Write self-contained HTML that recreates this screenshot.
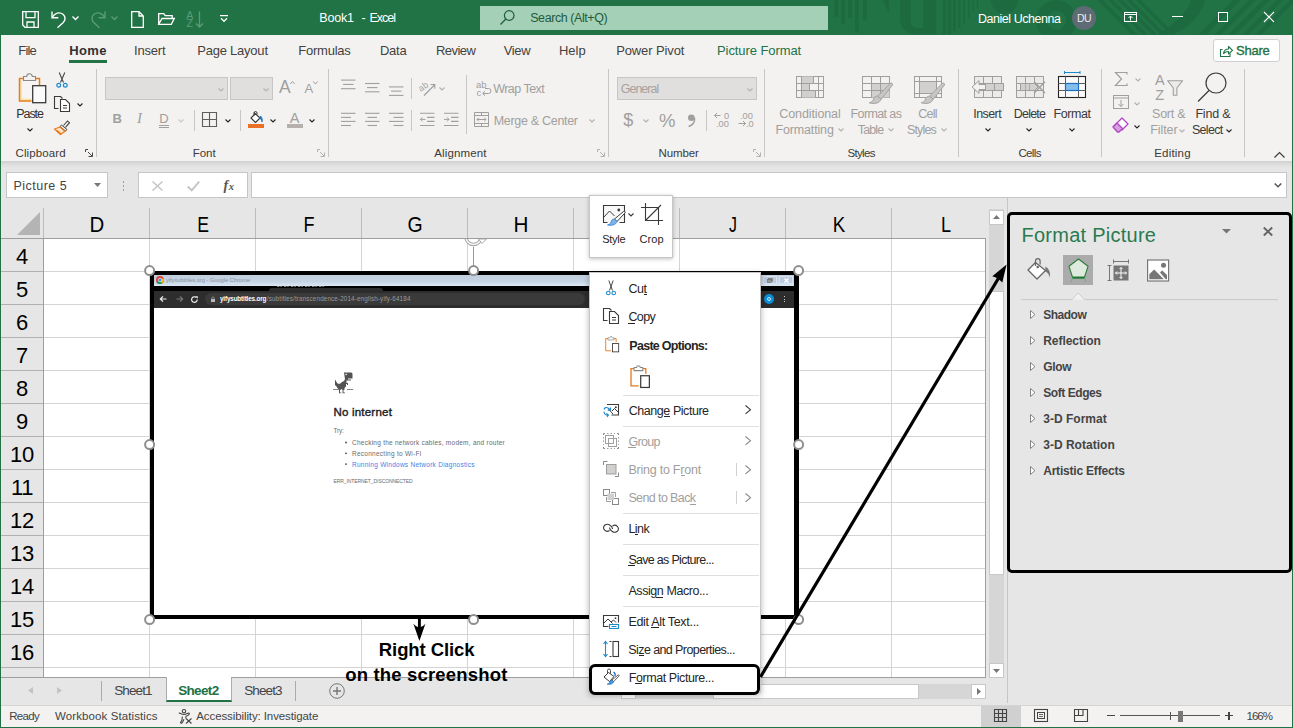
<!DOCTYPE html>
<html><head><meta charset="utf-8">
<style>
*{box-sizing:border-box;margin:0;padding:0}
html,body{width:1293px;height:728px;overflow:hidden;background:#e6e6e6;font-family:"Liberation Sans",sans-serif;}
#root{position:relative;width:1293px;height:728px;overflow:hidden;background:#e6e6e6}
.a{position:absolute}
.t{position:absolute;white-space:nowrap;line-height:1}
svg{position:absolute;overflow:visible}
#title{left:0;top:0;width:1293px;height:34.5px;background:#217346}
#tabs{left:1px;top:34px;width:1291px;height:31px;background:#f3f2f1}
#ribbon{left:1px;top:65px;width:1291px;height:96px;background:#f3f2f1}
#ribshadow{left:1px;top:161px;width:1291px;height:7px;background:linear-gradient(#cfcfcf,#dedede 50%,#e6e6e6)}
</style></head><body><div id="root">
<div id="tabs" class="a"></div>
<div class="t" style="left:18.30px;top:44px;font-size:13px;color:#444240;letter-spacing:-0.800px;">File</div>
<div class="t" style="left:134.00px;top:44px;font-size:13px;color:#444240;letter-spacing:-0.180px;">Insert</div>
<div class="t" style="left:197.20px;top:44px;font-size:13px;color:#444240;letter-spacing:-0.220px;">Page Layout</div>
<div class="t" style="left:298.30px;top:44px;font-size:13px;color:#444240;letter-spacing:-0.243px;">Formulas</div>
<div class="t" style="left:380.00px;top:44px;font-size:13px;color:#444240;letter-spacing:-0.267px;">Data</div>
<div class="t" style="left:436.00px;top:44px;font-size:13px;color:#444240;letter-spacing:-0.560px;">Review</div>
<div class="t" style="left:503.80px;top:44px;font-size:13px;color:#444240;letter-spacing:-0.400px;">View</div>
<div class="t" style="left:559.00px;top:44px;font-size:13px;color:#444240;letter-spacing:-0.033px;">Help</div>
<div class="t" style="left:616.20px;top:44px;font-size:13px;color:#444240;letter-spacing:-0.120px;">Power Pivot</div>
<div class="t" style="left:69.20px;top:44px;font-size:13px;color:#323130;letter-spacing:0.367px;font-weight:bold;">Home</div>
<div class="a" style="left:69px;top:60px;width:38px;height:3px;background:#217346;"></div>
<div class="t" style="left:717.00px;top:44px;font-size:13px;color:#217346;letter-spacing:-0.085px;">Picture Format</div>
<div class="a" style="left:1212.5px;top:38.5px;width:67px;height:23px;background:#fff;border:1px solid #d2d0ce;border-radius:3px"></div>
<svg style="left:1219.5px;top:44.5px" width="13" height="12" viewBox="0 0 13 12" ><path d="M2.500 4.500h-2v7h9.500v-3" fill="none" stroke="#217346" stroke-width="1.100"/><path d="M3.500 8.500c0.500-3 2.500-4.500 5-4.500v-2.500l4 3.800-4 3.700v-2.500c-2 0-3.500 0.500-5 2z" fill="none" stroke="#217346" stroke-width="1.100" stroke-linejoin="round"/></svg>
<div class="t" style="left:1236.00px;top:44px;font-size:13px;color:#217346;letter-spacing:-0.225px;-webkit-text-stroke:0.35px #217346;">Share</div>
<div id="ribbon" class="a"></div>
<div id="ribshadow" class="a"></div>
<div class="a" style="left:96px;top:69px;width:1px;height:88px;background:#c8c6c4;"></div>
<div class="a" style="left:328px;top:69px;width:1px;height:88px;background:#c8c6c4;"></div>
<div class="a" style="left:608px;top:69px;width:1px;height:88px;background:#c8c6c4;"></div>
<div class="a" style="left:764px;top:69px;width:1px;height:88px;background:#c8c6c4;"></div>
<div class="a" style="left:958px;top:69px;width:1px;height:88px;background:#c8c6c4;"></div>
<div class="a" style="left:1101px;top:69px;width:1px;height:88px;background:#c8c6c4;"></div>
<div class="a" style="left:1244px;top:69px;width:1px;height:88px;background:#c8c6c4;"></div>
<svg style="left:18px;top:72px" width="30" height="32" viewBox="0 0 30 32" ><path d="M6 6.500H1.500v22.500h12.500v-15h6v-7.500h-4" fill="#f6f5f4" stroke="none"/><path d="M3 8v19.500h11" fill="none" stroke="#fbe0a0" stroke-width="1.600"/><path d="M6 6.500H1.500v22.500h12" fill="none" stroke="#e67e17" stroke-width="1.500"/><path d="M16 6.500h5.500v7" fill="none" stroke="#e67e17" stroke-width="1.500"/>
<path d="M5.500 8.500v-4h3.200a2.800 2.800 0 0 1 5.600 0h3.200v4z" fill="#f3f2f1" stroke="#8a8886" stroke-width="1.100"/>
<rect x="14.700" y="13.700" width="13" height="17" fill="#fafafa" stroke="#3b3a39" stroke-width="1.300"/></svg>
<div class="t" style="left:16.30px;top:108px;font-size:12.5px;color:#323130;letter-spacing:-1.075px;">Paste</div>
<svg style="left:26.6px;top:127.7px" width="6" height="4.0" viewBox="0 0 6 4.0" ><path d="M0.5 0.5l2.5 2.5 2.5 -2.5" fill="none" stroke="#252423" stroke-width="1.1"/></svg>
<svg style="left:56px;top:72px" width="12" height="16" viewBox="0 0 12 16" ><path d="M3.200 0.500l4.300 10M8.800 0.500l-4.300 10" stroke="#484644" stroke-width="1.100" fill="none"/><circle cx="2.700" cy="13.200" r="1.900" fill="none" stroke="#1e8bcd" stroke-width="1.200"/><circle cx="9.300" cy="13.200" r="1.900" fill="none" stroke="#1e8bcd" stroke-width="1.200"/></svg>
<svg style="left:54px;top:96px" width="16" height="16" viewBox="0 0 16 16" ><path d="M4.500 12.500h-4v-12h6l2 2" fill="none" stroke="#3b3a39" stroke-width="1.100"/><path d="M6.500 3.500h5l4 4v8h-9z" fill="#fff" stroke="#3b3a39" stroke-width="1.100"/><path d="M9 9.500h4M9 12h4" stroke="#3b3a39" stroke-width="1"/></svg>
<svg style="left:76.8px;top:102.8px" width="6" height="4.0" viewBox="0 0 6 4.0" ><path d="M0.5 0.5l2.5 2.5 2.5 -2.5" fill="none" stroke="#252423" stroke-width="1.1"/></svg>
<svg style="left:54px;top:120px" width="17" height="15" viewBox="0 0 17 15" ><path d="M9.500 5.500l4-4.500 2 1.700-4 4.600" fill="none" stroke="#484644" stroke-width="1.100"/><path d="M7.500 5l5.500 4.500-1.500 1.500-5.500-4.500z" fill="#f3f2f1" stroke="#484644" stroke-width="1"/><path d="M6 7l5 4.300-4.500 3.200-6-5.500z" fill="#fde6cc" stroke="#e8791d" stroke-width="1.300" stroke-linejoin="round"/><path d="M3 10.500l4 3.500" stroke="#e8791d" stroke-width="1.200"/></svg>
<div class="t" style="left:15.50px;top:148px;font-size:11.5px;color:#3b3a39;letter-spacing:0.125px;">Clipboard</div>
<svg style="left:84.8px;top:149px" width="8" height="8" viewBox="0 0 8 8" ><path d="M0.5 3V0.5H3M3 3l4 4M7.5 3.5v4h-4" fill="none" stroke="#484644" stroke-width="1"/></svg>
<div class="a" style="left:105px;top:77px;width:123px;height:23px;background:#e1dfdd;border:1px solid #c8c6c4"></div>
<svg style="left:218.4px;top:87.6px" width="6" height="4.0" viewBox="0 0 6 4.0" ><path d="M0.5 0.5l2.5 2.5 2.5 -2.5" fill="none" stroke="#b3b0ad" stroke-width="1.1"/></svg>
<div class="a" style="left:230px;top:77px;width:43px;height:23px;background:#e1dfdd;border:1px solid #c8c6c4"></div>
<svg style="left:263px;top:87.6px" width="6" height="4.0" viewBox="0 0 6 4.0" ><path d="M0.5 0.5l2.5 2.5 2.5 -2.5" fill="none" stroke="#b3b0ad" stroke-width="1.1"/></svg>
<div class="t" style="left:279.00px;top:79px;font-size:17.5px;color:#a19f9d;letter-spacing:0.000px;">A</div>
<svg style="left:289.5px;top:80.5px" width="5" height="3.5" viewBox="0 0 5 3.5" ><path d="M0.300 3l2.200-2.500 2.200 2.500" fill="none" stroke="#a19f9d" stroke-width="1"/></svg>
<div class="t" style="left:304.50px;top:82px;font-size:13px;color:#a19f9d;letter-spacing:0.000px;">A</div>
<svg style="left:313px;top:80.5px" width="5" height="3.5" viewBox="0 0 5 3.5" ><path d="M0.300 0.500l2.200 2.500 2.200-2.500" fill="none" stroke="#a19f9d" stroke-width="1"/></svg>
<div class="t" style="left:112.50px;top:112px;font-size:13px;color:#a19f9d;letter-spacing:0.000px;font-weight:bold;">B</div>
<div class="t" style="left:136.90px;top:111px;font-size:15px;color:#a19f9d;letter-spacing:0.000px;font-style:italic;font-family:'Liberation Serif',serif;">I</div>
<div class="t" style="left:159.30px;top:112px;font-size:13px;color:#a19f9d;letter-spacing:0.000px;">D</div>
<div class="a" style="left:159px;top:124.6px;width:10px;height:1px;background:#a19f9d;"></div>
<div class="a" style="left:159px;top:126.6px;width:10px;height:1px;background:#a19f9d;"></div>
<svg style="left:178.4px;top:118.7px" width="6" height="4.0" viewBox="0 0 6 4.0" ><path d="M0.5 0.5l2.5 2.5 2.5 -2.5" fill="none" stroke="#c8c6c4" stroke-width="1.1"/></svg>
<div class="a" style="left:194px;top:110px;width:1px;height:21px;background:#c8c6c4;"></div>
<svg style="left:202px;top:112px" width="15" height="15" viewBox="0 0 15 15" ><path d="M0.500 0.500h14v14h-14zM7.500 0.500v14M0.500 7.500h14" fill="none" stroke="#605e5c" stroke-width="1.100"/></svg>
<svg style="left:224.5px;top:118.7px" width="6" height="4.0" viewBox="0 0 6 4.0" ><path d="M0.5 0.5l2.5 2.5 2.5 -2.5" fill="none" stroke="#252423" stroke-width="1.1"/></svg>
<div class="a" style="left:240px;top:110px;width:1px;height:21px;background:#c8c6c4;"></div>
<svg style="left:249px;top:111px" width="16" height="13" viewBox="0 0 16 13" ><path d="M5 1.500l6 5.500-4.500 4.500-4.500-4.500 4.500-4.500" fill="#fff" stroke="#3b3a39" stroke-width="1.100" stroke-linejoin="round"/><path d="M5 4.500v-2.500a1.500 1.500 0 0 1 3 0v1.500" fill="none" stroke="#3b3a39" stroke-width="1"/><path d="M11.500 5c1.500 1.500 2.300 3.500 1.500 6-0.300-2-1.500-3.500-2.500-4z" fill="#1e6fc0" stroke="#1e6fc0" stroke-width="0.800"/></svg>
<div class="a" style="left:248px;top:124px;width:16px;height:3.6px;background:#e97025;"></div>
<svg style="left:270.3px;top:118.7px" width="6" height="4.0" viewBox="0 0 6 4.0" ><path d="M0.5 0.5l2.5 2.5 2.5 -2.5" fill="none" stroke="#252423" stroke-width="1.1"/></svg>
<div class="t" style="left:289.80px;top:111px;font-size:14.5px;color:#a19f9d;letter-spacing:0.000px;">A</div>
<div class="a" style="left:287px;top:124px;width:16px;height:3.6px;background:#b3b0ad;"></div>
<svg style="left:309.3px;top:118.7px" width="6" height="4.0" viewBox="0 0 6 4.0" ><path d="M0.5 0.5l2.5 2.5 2.5 -2.5" fill="none" stroke="#252423" stroke-width="1.1"/></svg>
<div class="t" style="left:192.80px;top:148px;font-size:11.5px;color:#3b3a39;letter-spacing:-0.067px;">Font</div>
<svg style="left:316.7px;top:149px" width="8" height="8" viewBox="0 0 8 8" ><path d="M0.5 3V0.5H3M3 3l4 4M7.5 3.5v4h-4" fill="none" stroke="#b3b0ad" stroke-width="1"/></svg>
<svg style="left:340.7px;top:0px" width="15" height="100" viewBox="0 0 15 100" ><path d="M0 80.1H14.5" stroke="#a19f9d" stroke-width="1.100"/><path d="M2 84.4H12.5" stroke="#a19f9d" stroke-width="1.100"/><path d="M0 88.7H14.5" stroke="#a19f9d" stroke-width="1.100"/></svg>
<svg style="left:364.9px;top:0px" width="15" height="100" viewBox="0 0 15 100" ><path d="M0 83.5H14.5" stroke="#a19f9d" stroke-width="1.100"/><path d="M2 87.6H12.5" stroke="#a19f9d" stroke-width="1.100"/><path d="M0 91.8H14.5" stroke="#a19f9d" stroke-width="1.100"/></svg>
<svg style="left:388.9px;top:0px" width="15" height="100" viewBox="0 0 15 100" ><path d="M0 86.9H14.5" stroke="#a19f9d" stroke-width="1.100"/><path d="M2 91.1H12.5" stroke="#a19f9d" stroke-width="1.100"/><path d="M0 95.4H14.5" stroke="#a19f9d" stroke-width="1.100"/></svg>
<svg style="left:340.7px;top:0px" width="15" height="130" viewBox="0 0 15 130" ><path d="M0 113.3H14.5" stroke="#a19f9d" stroke-width="1.100"/><path d="M0 117.4H10" stroke="#a19f9d" stroke-width="1.100"/><path d="M0 121.4H14.5" stroke="#a19f9d" stroke-width="1.100"/><path d="M0 125.5H10" stroke="#a19f9d" stroke-width="1.100"/></svg>
<svg style="left:364.9px;top:0px" width="15" height="130" viewBox="0 0 15 130" ><path d="M0 113.3H14.5" stroke="#a19f9d" stroke-width="1.100"/><path d="M2.5 117.4H12" stroke="#a19f9d" stroke-width="1.100"/><path d="M0 121.4H14.5" stroke="#a19f9d" stroke-width="1.100"/><path d="M2.5 125.5H12" stroke="#a19f9d" stroke-width="1.100"/></svg>
<svg style="left:388.9px;top:0px" width="15" height="130" viewBox="0 0 15 130" ><path d="M0 113.3H14.5" stroke="#a19f9d" stroke-width="1.100"/><path d="M4.5 117.4H14.5" stroke="#a19f9d" stroke-width="1.100"/><path d="M0 121.4H14.5" stroke="#a19f9d" stroke-width="1.100"/><path d="M4.5 125.5H14.5" stroke="#a19f9d" stroke-width="1.100"/></svg>
<div class="a" style="left:411px;top:78px;width:1px;height:21px;background:#c8c6c4;"></div>
<div class="a" style="left:411px;top:110px;width:1px;height:21px;background:#c8c6c4;"></div>
<svg style="left:418.5px;top:79.5px" width="17" height="16" viewBox="0 0 17 16" ><path d="M5 15.500l10.500-10.500M11.500 4.500h4.300v4.300" fill="none" stroke="#a19f9d" stroke-width="1.100"/><g transform="rotate(-35 5 6)"><text x="-1" y="9" font-size="9" fill="#a19f9d" font-family="Liberation Sans">ab</text></g></svg>
<svg style="left:439.4px;top:87px" width="6" height="4.0" viewBox="0 0 6 4.0" ><path d="M0.5 0.5l2.5 2.5 2.5 -2.5" fill="none" stroke="#b3b0ad" stroke-width="1.1"/></svg>
<svg style="left:419.6px;top:0px" width="15" height="130" viewBox="0 0 15 130" ><path d="M0 113.300H14.500M7 117.400H14.500M7 121.400H14.500M0 125.500H14.500" stroke="#a19f9d" stroke-width="1.100"/><path d="M0.500 119.400h5M2.500 117.400l-2 2 2 2" fill="none" stroke="#a19f9d" stroke-width="1"/></svg>
<svg style="left:443.9px;top:0px" width="15" height="130" viewBox="0 0 15 130" ><path d="M0 113.300H14.500M7 117.400H14.500M7 121.400H14.500M0 125.500H14.500" stroke="#a19f9d" stroke-width="1.100"/><path d="M0 119.400h5M3 117.400l2 2-2 2" fill="none" stroke="#a19f9d" stroke-width="1"/></svg>
<div class="a" style="left:466px;top:75px;width:1px;height:59px;background:#c8c6c4;"></div>
<div class="t" style="left:476.00px;top:80px;font-size:9.5px;color:#a19f9d;letter-spacing:0.000px;">ab</div>
<div class="t" style="left:476.50px;top:88px;font-size:9.5px;color:#a19f9d;letter-spacing:0.000px;">c</div>
<svg style="left:482px;top:88px" width="9" height="8" viewBox="0 0 9 8" ><path d="M3 0.500h3.500a2.500 2.500 0 0 1 0 5h-5.500M3 3.300l-2.300 2.200 2.300 2.200" fill="none" stroke="#a19f9d" stroke-width="1"/></svg>
<div class="t" style="left:493.20px;top:83px;font-size:12.5px;color:#a19f9d;letter-spacing:-0.525px;">Wrap Text</div>
<svg style="left:474px;top:112px" width="15" height="15" viewBox="0 0 15 15" ><path d="M0.500 0.500h14v14h-14zM0.500 3.500h14M0.500 11.500h14M7.500 0.500v3M7.500 11.500v3" fill="none" stroke="#a19f9d" stroke-width="1"/><path d="M3 7.500h9M4.800 5.700l-1.800 1.800 1.800 1.800M10.200 5.700l1.800 1.800-1.800 1.800" fill="none" stroke="#a19f9d" stroke-width="1"/></svg>
<div class="t" style="left:493.70px;top:115px;font-size:12.5px;color:#a19f9d;letter-spacing:-0.300px;">Merge &amp; Center</div>
<svg style="left:588.5px;top:118.7px" width="6" height="4.0" viewBox="0 0 6 4.0" ><path d="M0.5 0.5l2.5 2.5 2.5 -2.5" fill="none" stroke="#b3b0ad" stroke-width="1.1"/></svg>
<div class="t" style="left:434.20px;top:148px;font-size:11.5px;color:#3b3a39;letter-spacing:0.150px;">Alignment</div>
<svg style="left:596.8px;top:149px" width="8" height="8" viewBox="0 0 8 8" ><path d="M0.5 3V0.5H3M3 3l4 4M7.5 3.5v4h-4" fill="none" stroke="#b3b0ad" stroke-width="1"/></svg>
<div class="a" style="left:617px;top:77px;width:140px;height:23px;background:#e1dfdd;border:1px solid #c8c6c4"></div>
<div class="t" style="left:620.70px;top:83px;font-size:12.5px;color:#a8a29f;letter-spacing:-0.983px;">General</div>
<svg style="left:747.1px;top:88px" width="6" height="4.0" viewBox="0 0 6 4.0" ><path d="M0.5 0.5l2.5 2.5 2.5 -2.5" fill="none" stroke="#b3b0ad" stroke-width="1.1"/></svg>
<div class="t" style="left:623.30px;top:111px;font-size:18px;color:#a19f9d;letter-spacing:0.000px;">$</div>
<svg style="left:642.6px;top:118.7px" width="6" height="4.0" viewBox="0 0 6 4.0" ><path d="M0.5 0.5l2.5 2.5 2.5 -2.5" fill="none" stroke="#b3b0ad" stroke-width="1.1"/></svg>
<div class="t" style="left:659.00px;top:112px;font-size:18.5px;color:#a19f9d;letter-spacing:-0.700px;">%</div>
<svg style="left:687px;top:113.5px" width="9" height="13" viewBox="0 0 9 13" ><circle cx="4.300" cy="3.800" r="3.300" fill="#a19f9d"/><path d="M7.600 3.800c0.300 4-2 7.500-6 8.700" fill="none" stroke="#a19f9d" stroke-width="1.500"/></svg>
<div class="a" style="left:706px;top:110px;width:1px;height:21px;background:#c8c6c4;"></div>
<svg style="left:714px;top:112px" width="16" height="15" viewBox="0 0 16 15" ><path d="M0.500 3.500h6M3 1l-2.500 2.500 2.500 2.500" fill="none" stroke="#a19f9d" stroke-width="1"/><text x="10" y="7" font-size="9.300" fill="#a19f9d" font-family="Liberation Sans">0</text><text x="2" y="15" font-size="9.300" fill="#a19f9d" font-family="Liberation Sans">.00</text></svg>
<svg style="left:737.9px;top:112px" width="16" height="15" viewBox="0 0 16 15" ><text x="2" y="7" font-size="9.300" fill="#a19f9d" font-family="Liberation Sans">.00</text><path d="M0.500 11.500h7M5 9l2.500 2.500-2.500 2.500" fill="none" stroke="#a19f9d" stroke-width="1"/><text x="8" y="15" font-size="9.300" fill="#a19f9d" font-family="Liberation Sans">.0</text></svg>
<div class="t" style="left:658.60px;top:148px;font-size:11.5px;color:#3b3a39;letter-spacing:-0.120px;">Number</div>
<svg style="left:752.9px;top:149px" width="8" height="8" viewBox="0 0 8 8" ><path d="M0.5 3V0.5H3M3 3l4 4M7.5 3.5v4h-4" fill="none" stroke="#b3b0ad" stroke-width="1"/></svg>
<svg style="left:796px;top:76px" width="28" height="22" viewBox="0 0 28 22" ><rect x="0.500" y="0.500" width="27" height="21" fill="#f3f2f1" stroke="#a19f9d"/><rect x="5.500" y="0.500" width="12" height="7" fill="#d2d0ce"/><rect x="5.500" y="7.500" width="8" height="7" fill="#d2d0ce"/><rect x="5.500" y="14.500" width="14" height="7" fill="#d2d0ce"/><path d="M0.500 7.500h27M0.500 14.500h27M5.500 0.500v21M17.500 0.500v7M22.500 0.500v21M13.500 7.500v7M19.500 14.500v7" fill="none" stroke="#a19f9d"/></svg>
<svg style="left:862px;top:76px" width="31" height="28" viewBox="0 0 31 28" ><rect x="0.500" y="0.500" width="27" height="21" fill="#f3f2f1" stroke="#a19f9d"/><rect x="9.500" y="7.500" width="18" height="14" fill="#d2d0ce"/><path d="M0.500 7.500h27M0.500 14.500h27M9.500 0.500v21M18.500 0.500v21" fill="none" stroke="#a19f9d"/><g transform="translate(0,0)"><path d="M28.300 7.300c1.300-1 3 0.600 2 2L19.200 23.200l-3.700-3z" fill="#c8c6c4" stroke="#a19f9d" stroke-width="0.900"/><path d="M15.500 20.200l3.700 3c-1.500 4-6.500 5.200-12 3.600 3-0.700 3.800-2 4.300-3.800 0.500-1.800 2-2.800 4-2.800z" fill="#c8c6c4" stroke="#a19f9d" stroke-width="0.900"/></g></svg>
<svg style="left:914px;top:76px" width="31" height="28" viewBox="0 0 31 28" ><rect x="0.500" y="0.500" width="27" height="21" fill="#f3f2f1" stroke="#a19f9d"/><rect x="5.500" y="5.500" width="17" height="12" fill="#d2d0ce"/><path d="M0.500 5.500h27M0.500 17.500h27M5.500 0.500v21M22.500 0.500v21" fill="none" stroke="#a19f9d"/><g transform="translate(0,0)"><path d="M28.300 7.300c1.300-1 3 0.600 2 2L19.200 23.200l-3.700-3z" fill="#c8c6c4" stroke="#a19f9d" stroke-width="0.900"/><path d="M15.500 20.200l3.700 3c-1.500 4-6.500 5.200-12 3.600 3-0.700 3.800-2 4.300-3.800 0.500-1.800 2-2.800 4-2.800z" fill="#c8c6c4" stroke="#a19f9d" stroke-width="0.900"/></g></svg>
<div class="t" style="left:779.30px;top:108px;font-size:12.5px;color:#a19f9d;letter-spacing:-0.110px;">Conditional</div>
<div class="t" style="left:775.50px;top:124px;font-size:12.5px;color:#a19f9d;letter-spacing:-0.156px;">Formatting</div>
<svg style="left:838px;top:128px" width="6" height="4.0" viewBox="0 0 6 4.0" ><path d="M0.5 0.5l2.5 2.5 2.5 -2.5" fill="none" stroke="#b3b0ad" stroke-width="1.1"/></svg>
<div class="t" style="left:850.50px;top:108px;font-size:12.5px;color:#a19f9d;letter-spacing:-0.600px;">Format as</div>
<div class="t" style="left:857.80px;top:124px;font-size:12.5px;color:#a19f9d;letter-spacing:-0.875px;">Table</div>
<svg style="left:888px;top:128px" width="6" height="4.0" viewBox="0 0 6 4.0" ><path d="M0.5 0.5l2.5 2.5 2.5 -2.5" fill="none" stroke="#b3b0ad" stroke-width="1.1"/></svg>
<div class="t" style="left:918.20px;top:108px;font-size:12.5px;color:#a19f9d;letter-spacing:-0.700px;">Cell</div>
<div class="t" style="left:906.90px;top:124px;font-size:12.5px;color:#a19f9d;letter-spacing:-0.820px;">Styles</div>
<svg style="left:940.7px;top:128px" width="6" height="4.0" viewBox="0 0 6 4.0" ><path d="M0.5 0.5l2.5 2.5 2.5 -2.5" fill="none" stroke="#b3b0ad" stroke-width="1.1"/></svg>
<div class="t" style="left:847.40px;top:148px;font-size:11.5px;color:#3b3a39;letter-spacing:-0.640px;">Styles</div>
<svg style="left:971px;top:75px" width="34" height="24" viewBox="0 0 34 24" ><g transform="translate(0.500,0.500)"><rect x="3" y="1" width="27" height="21" fill="#ebebeb" stroke="#a19f9d"/><path d="M3 8h27M3 15h27M12 1v21M21 1v21" fill="none" stroke="#a19f9d"/><rect x="14" y="8" width="18" height="7" fill="#d2d0ce" stroke="#a19f9d"/><path d="M23 8v7" stroke="#a19f9d"/><path d="M0.600 11.500l6.900-6.400v3.900h6.500v5h-6.500v3.900z" fill="#f3f2f1" stroke="#a19f9d" stroke-width="1" stroke-linejoin="round"/></g></svg>
<svg style="left:1015px;top:75px" width="32" height="24" viewBox="0 0 32 24" ><g transform="translate(0.500,0.500)"><rect x="1" y="1" width="27" height="21" fill="#ebebeb" stroke="#a19f9d"/><path d="M1 8h27M1 15h27M10 1v21M19 1v21" fill="none" stroke="#a19f9d"/><path d="M5 8h14l3.500 3.500-3.500 3.500h-14z" fill="#d2d0ce" stroke="#a19f9d"/><path d="M10 8v7M14 8v7" stroke="#a19f9d" stroke-width="0.800"/><path d="M18.700 6.200l10.800 11.300M29.500 6.200l-10.800 11.300" stroke="#a19f9d" stroke-width="1.300"/></g></svg>
<svg style="left:1058px;top:71px" width="29" height="28" viewBox="0 0 29 28" ><path d="M6.500 1.500h15.500M6.500 0v3M22 0v3" stroke="#1e8bcd" stroke-width="1"/><rect x="0.500" y="5.500" width="27" height="21" fill="#fafafa" stroke="#252423" stroke-width="1.100"/><path d="M0.500 12.500h27M0.500 19.500h27M7.500 5.500v21M20.500 5.500v21" fill="none" stroke="#605e5c" stroke-width="1"/><rect x="7.500" y="12.500" width="13" height="7" fill="#83beec" stroke="#1e6fc0" stroke-width="1.200"/></svg>
<div class="t" style="left:973.30px;top:108px;font-size:12.5px;color:#3b3a39;letter-spacing:-0.580px;">Insert</div>
<svg style="left:984.5px;top:127.7px" width="6" height="4.0" viewBox="0 0 6 4.0" ><path d="M0.5 0.5l2.5 2.5 2.5 -2.5" fill="none" stroke="#252423" stroke-width="1.1"/></svg>
<div class="t" style="left:1013.70px;top:108px;font-size:12.5px;color:#3b3a39;letter-spacing:-0.760px;">Delete</div>
<svg style="left:1026.4px;top:127.7px" width="6" height="4.0" viewBox="0 0 6 4.0" ><path d="M0.5 0.5l2.5 2.5 2.5 -2.5" fill="none" stroke="#252423" stroke-width="1.1"/></svg>
<div class="t" style="left:1053.40px;top:108px;font-size:12.5px;color:#3b3a39;letter-spacing:-0.380px;">Format</div>
<svg style="left:1068.6px;top:127.7px" width="6" height="4.0" viewBox="0 0 6 4.0" ><path d="M0.5 0.5l2.5 2.5 2.5 -2.5" fill="none" stroke="#252423" stroke-width="1.1"/></svg>
<div class="t" style="left:1018.40px;top:148px;font-size:11.5px;color:#3b3a39;letter-spacing:-0.625px;">Cells</div>
<svg style="left:1114.8px;top:71.7px" width="13" height="14" viewBox="0 0 13 14" ><path d="M12 2.500v-2h-11.500l6 6.500-6 6.500h11.500v-2" fill="none" stroke="#a19f9d" stroke-width="1.200"/></svg>
<svg style="left:1135.2px;top:78px" width="6" height="4.0" viewBox="0 0 6 4.0" ><path d="M0.5 0.5l2.5 2.5 2.5 -2.5" fill="none" stroke="#b3b0ad" stroke-width="1.1"/></svg>
<svg style="left:1112.5px;top:94.5px" width="16" height="14" viewBox="0 0 16 14" ><rect x="0.500" y="0.500" width="15" height="13" fill="none" stroke="#a19f9d"/><path d="M0.500 3h15M8 5v6.500M5.500 9l2.500 2.500 2.500-2.500" fill="none" stroke="#a19f9d"/></svg>
<svg style="left:1133.6px;top:101.5px" width="6" height="4.0" viewBox="0 0 6 4.0" ><path d="M0.5 0.5l2.5 2.5 2.5 -2.5" fill="none" stroke="#b3b0ad" stroke-width="1.1"/></svg>
<svg style="left:1112px;top:117px" width="17" height="16" viewBox="0 0 17 16" ><path d="M1 10l9-9 6 6-6.500 6.500" fill="#fff" stroke="#b146c2" stroke-width="1.300" stroke-linejoin="round"/><path d="M1 10l4-4 5.500 5.500-3.500 3.500h-1.500z" fill="#d59ee0" stroke="#b146c2" stroke-width="1.300" stroke-linejoin="round"/></svg>
<svg style="left:1133.6px;top:124.5px" width="6" height="4.0" viewBox="0 0 6 4.0" ><path d="M0.5 0.5l2.5 2.5 2.5 -2.5" fill="none" stroke="#252423" stroke-width="1.1"/></svg>
<div class="t" style="left:1155.00px;top:73px;font-size:14.5px;color:#a19f9d;letter-spacing:0.000px;">A</div>
<div class="t" style="left:1155.30px;top:88px;font-size:14.5px;color:#a19f9d;letter-spacing:0.000px;">Z</div>
<svg style="left:1167px;top:79px" width="17" height="17" viewBox="0 0 17 17" ><path d="M0.600 1.700h15l-5.700 7.300v7.300h-3.600v-7.300z" fill="#ebebeb" stroke="#a19f9d" stroke-width="1.100" stroke-linejoin="round"/></svg>
<div class="t" style="left:1152.10px;top:108px;font-size:12.5px;color:#a19f9d;letter-spacing:-0.260px;">Sort &amp;</div>
<div class="t" style="left:1150.30px;top:124px;font-size:12.5px;color:#a19f9d;letter-spacing:-0.100px;">Filter</div>
<svg style="left:1179.4px;top:128.5px" width="6" height="4.0" viewBox="0 0 6 4.0" ><path d="M0.5 0.5l2.5 2.5 2.5 -2.5" fill="none" stroke="#b3b0ad" stroke-width="1.1"/></svg>
<svg style="left:1197px;top:72px" width="31" height="31" viewBox="0 0 31 31" ><circle cx="19" cy="11" r="10" fill="none" stroke="#3b3a39" stroke-width="1.200"/><path d="M12 18.500l-11 11" stroke="#3b3a39" stroke-width="1.200"/></svg>
<div class="t" style="left:1195.40px;top:108px;font-size:12.5px;color:#3b3a39;letter-spacing:-0.180px;">Find &amp;</div>
<div class="t" style="left:1191.90px;top:124px;font-size:12.5px;color:#3b3a39;letter-spacing:-0.680px;">Select</div>
<svg style="left:1226.4px;top:128.5px" width="6" height="4.0" viewBox="0 0 6 4.0" ><path d="M0.5 0.5l2.5 2.5 2.5 -2.5" fill="none" stroke="#252423" stroke-width="1.1"/></svg>
<div class="t" style="left:1154.20px;top:148px;font-size:11.5px;color:#3b3a39;letter-spacing:0.200px;">Editing</div>
<svg style="left:1273.5px;top:151.5px" width="11" height="6" viewBox="0 0 11 6" ><path d="M0.500 5.500l5-5 5 5" fill="none" stroke="#3b3a39" stroke-width="1.200"/></svg>
<div id="title" class="a">
<svg style="left:0;top:0" width="1293" height="34.5" viewBox="0 0 1293 34.5"><defs><clipPath id="tc"><rect x="0" y="0" width="1293" height="34.500"/></clipPath></defs><g fill="#1d6a40" stroke="none" clip-path="url(#tc)">
<rect x="834.300" y="0" width="4.100" height="16.700"/><rect x="841.300" y="0" width="3.600" height="23.800"/><rect x="848.200" y="0" width="3.700" height="18"/><rect x="855" y="0" width="3.800" height="32.500"/><rect x="863" y="0" width="3.800" height="20.800"/>
<path d="M882.500 0h6.500v14z"/>
<path d="M900 0h10.700v22a6 6 0 0 0 6 6h6.300v6.500h-8a15 15 0 0 1-15-15z"/><rect x="923" y="0" width="13.300" height="34.500"/>
<rect x="942.800" y="0" width="3.200" height="34.500"/><rect x="947.800" y="0" width="3.400" height="34.500"/><rect x="953" y="0" width="2.800" height="31.500"/><rect x="958.200" y="0" width="2.200" height="28"/><rect x="963.200" y="0" width="1.800" height="24"/><rect x="967.900" y="0" width="1.600" height="18"/><rect x="972.500" y="0" width="1.500" height="12"/><rect x="976.800" y="0" width="1.200" height="8"/>
<path d="M991 0a13.500 13.500 0 0 0 27 0z"/>
<path d="M1056.400 0a20.300 20.300 0 1 0 0.010 0zM1056.400 10.800a9.500 9.500 0 1 1-0.010 0z" fill-rule="evenodd"/>
<path d="M1097 0h5.500l35 35h-5.500zM1108 0h5l35 35h-5zM1117.500 0h5l35 35h-5zM1126.600 0h5l35 35h-5zM1135.800 0h5l35 35h-5z"/>
<path d="M1191 0h14q-5 22-33 35h-16q30-17 35-35z"/>
<path d="M1233 0h8l-35 35h-8zM1249 0h7l-35 35h-7zM1263 0h7l-35 35h-7zM1277 0h6l-35 35h-6zM1290 0h3v3l-32 32h-6z"/>
</g></svg>
<svg style="left:21.5px;top:10.5px" width="17" height="17" viewBox="0 0 17 17" ><path d="M0.7 0.7h15.6v15.6H3l-2.3-2.300z M4 0.700v6h9v-6 M5 16.300v-5.300h7v5.300" fill="none" stroke="#fff" stroke-width="1.300"/></svg>
<svg style="left:51.3px;top:10.5px" width="15" height="17" viewBox="0 0 15 17" ><g fill="none" stroke="#fff" stroke-width="1.400"><path d="M1 0.500v6.300h6.300"/><path d="M1.300 6.500C3.500 2 8.500 0.500 12 3.200c3 2.500 2.300 6 0.300 8.200L6.500 16.800"/></g></svg>
<svg style="left:72.2px;top:15.5px" width="7" height="4.5" viewBox="0 0 7 4.5" ><path d="M0.5 0.5l3.0 3.0 3.0 -3.0" fill="none" stroke="#fff" stroke-width="1.4"/></svg>
<svg style="left:90.7px;top:10.5px" width="15" height="17" viewBox="0 0 15 17" ><g transform="translate(15,0) scale(-1,1)" fill="none" stroke="#5b9c78" stroke-width="1.400"><path d="M1 0.500v6.300h6.300"/><path d="M1.300 6.500C3.500 2 8.500 0.500 12 3.200c3 2.500 2.300 6 0.300 8.200L6.500 16.800"/></g></svg>
<svg style="left:111px;top:15.5px" width="7" height="4.5" viewBox="0 0 7 4.5" ><path d="M0.5 0.5l3.0 3.0 3.0 -3.0" fill="none" stroke="#5b9c78" stroke-width="1.4"/></svg>
<svg style="left:130.5px;top:10.5px" width="13" height="17" viewBox="0 0 13 17" ><path d="M0.700 0.700h7.300l4.300 4.300v11.300H0.700z M8 0.700v4.300h4.300" fill="none" stroke="#fff" stroke-width="1.300"/></svg>
<svg style="left:157.5px;top:12.5px" width="17" height="12" viewBox="0 0 17 12" ><path d="M0.700 11V0.700h5l1.500 2h7v3 M0.700 11.300l3.300-5.800h12.300l-3 5.800z" fill="none" stroke="#fff" stroke-width="1.300"/></svg>
<div class="t" style="left:186.30px;top:10px;font-size:10.5px;color:#5b9c78;letter-spacing:0.000px;">A</div>
<div class="t" style="left:186.60px;top:18px;font-size:10.5px;color:#5b9c78;letter-spacing:0.000px;">Z</div>
<svg style="left:195px;top:10.5px" width="9" height="17" viewBox="0 0 9 17" ><path d="M4.500 0.500v15.500M1 12.500l3.500 3.500 3.500-3.500" fill="none" stroke="#5b9c78" stroke-width="1.300"/></svg>
<svg style="left:219.5px;top:14.5px" width="8" height="7" viewBox="0 0 8 7" ><path d="M0 0.700h8M1 3.300l3 3 3-3" fill="none" stroke="#fff" stroke-width="1.300"/></svg>
<div class="t" style="left:319.30px;top:12px;font-size:12.5px;color:#fff;letter-spacing:-0.175px;">Book1</div>
<div class="t" style="left:361.50px;top:12px;font-size:12.5px;color:#fff;letter-spacing:0.000px;">-</div>
<div class="t" style="left:369.50px;top:12px;font-size:12.5px;color:#fff;letter-spacing:-1.025px;">Excel</div>
<div class="a" style="left:480px;top:6px;width:348px;height:24px;background:#a4d0b7;"></div>
<svg style="left:500px;top:10.3px" width="15" height="15" viewBox="0 0 15 15" ><circle cx="9.200" cy="5.500" r="4.800" fill="none" stroke="#1f5c3d" stroke-width="1.200"/><path d="M5.800 9l-5.300 5.500" stroke="#1f5c3d" stroke-width="1.200"/></svg>
<div class="t" style="left:530.20px;top:12px;font-size:12.5px;color:#1f5c3d;letter-spacing:-0.423px;">Search (Alt+Q)</div>
<div class="t" style="left:978.00px;top:13px;font-size:12.5px;color:#fff;letter-spacing:-0.462px;">Daniel Uchenna</div>
<div class="a" style="left:1072.3px;top:6px;width:23.6px;height:23.6px;background:#5f6b74;border-radius:12px"></div>
<div class="t" style="left:1077.00px;top:13px;font-size:10.5px;color:#e8ecef;letter-spacing:-0.700px;">DU</div>
<svg style="left:1124px;top:12px" width="13" height="10" viewBox="0 0 13 10" ><rect x="0.500" y="0.500" width="12" height="9" fill="none" stroke="#fff" stroke-width="1"/><path d="M0.500 2.500h12M6.500 8.500v-4.500M4.500 6l2-2 2 2" fill="none" stroke="#fff" stroke-width="1"/></svg>
<div class="a" style="left:1172px;top:16px;width:10.5px;height:1px;background:#fff;"></div>
<div class="a" style="left:1218px;top:12px;width:10px;height:10px;background:transparent;border:1px solid #fff"></div>
<svg style="left:1264px;top:12px" width="10" height="10" viewBox="0 0 10 10" ><path d="M0 0l10 10M10 0l-10 10" stroke="#fff" stroke-width="1.100"/></svg>
</div>
<div class="a" style="left:6px;top:172px;width:102px;height:26px;background:#fff;border:1px solid #c6c6c6"></div>
<div class="t" style="left:13.50px;top:180px;font-size:12.5px;color:#444;letter-spacing:0.475px;">Picture 5</div>
<svg style="left:94px;top:182.5px" width="7" height="4" viewBox="0 0 7 4" ><path d="M0 0h7l-3.500 4z" fill="#777"/></svg>
<div class="a" style="left:122.5px;top:181px;width:1.5px;height:1.5px;background:#a0a0a0;"></div>
<div class="a" style="left:122.5px;top:185px;width:1.5px;height:1.5px;background:#a0a0a0;"></div>
<div class="a" style="left:122.5px;top:189px;width:1.5px;height:1.5px;background:#a0a0a0;"></div>
<div class="a" style="left:138px;top:172px;width:110px;height:26px;background:#fff;border:1px solid #c6c6c6"></div>
<svg style="left:151.5px;top:180.5px" width="11" height="10" viewBox="0 0 11 10" ><path d="M0.500 0.500l10 9M10.500 0.500l-10 9" stroke="#c4c4c4" stroke-width="1.500" fill="none"/></svg>
<svg style="left:187px;top:180.5px" width="13" height="10" viewBox="0 0 13 10" ><path d="M0.700 5.500l4 3.800 7.500-8.600" stroke="#c4c4c4" stroke-width="1.900" fill="none"/></svg>
<div class="t" style="left:223.50px;top:179px;font-size:14px;color:#555;letter-spacing:0.000px;font-style:italic;font-family:'Liberation Serif',serif;font-weight:bold;">f</div>
<div class="t" style="left:228.70px;top:182px;font-size:10.5px;color:#555;letter-spacing:0.000px;font-style:italic;font-family:'Liberation Serif',serif;font-weight:bold;">x</div>
<div class="a" style="left:251px;top:172px;width:1036px;height:26px;background:#fff;border:1px solid #c6c6c6"></div>
<svg style="left:1274px;top:182.5px" width="8" height="5" viewBox="0 0 8 5" ><path d="M0.700 0.500l3.300 3.300 3.300-3.300" stroke="#555" stroke-width="1.500" fill="none"/></svg>
<div class="a" style="left:1px;top:198px;width:1006px;height:41px;background:#e6e6e6;"></div>
<div class="a" style="left:44px;top:239px;width:941px;height:438px;background:#fff;"></div>
<div class="a" style="left:1px;top:239px;width:42px;height:438px;background:#e6e6e6;"></div>
<div class="a" style="left:44px;top:271px;width:941px;height:1px;background:#d4d4d4;"></div>
<div class="a" style="left:1px;top:271px;width:42px;height:1px;background:#b1b1b1;"></div>
<div class="a" style="left:44px;top:304px;width:941px;height:1px;background:#d4d4d4;"></div>
<div class="a" style="left:1px;top:304px;width:42px;height:1px;background:#b1b1b1;"></div>
<div class="a" style="left:44px;top:337px;width:941px;height:1px;background:#d4d4d4;"></div>
<div class="a" style="left:1px;top:337px;width:42px;height:1px;background:#b1b1b1;"></div>
<div class="a" style="left:44px;top:370px;width:941px;height:1px;background:#d4d4d4;"></div>
<div class="a" style="left:1px;top:370px;width:42px;height:1px;background:#b1b1b1;"></div>
<div class="a" style="left:44px;top:403px;width:941px;height:1px;background:#d4d4d4;"></div>
<div class="a" style="left:1px;top:403px;width:42px;height:1px;background:#b1b1b1;"></div>
<div class="a" style="left:44px;top:436px;width:941px;height:1px;background:#d4d4d4;"></div>
<div class="a" style="left:1px;top:436px;width:42px;height:1px;background:#b1b1b1;"></div>
<div class="a" style="left:44px;top:469px;width:941px;height:1px;background:#d4d4d4;"></div>
<div class="a" style="left:1px;top:469px;width:42px;height:1px;background:#b1b1b1;"></div>
<div class="a" style="left:44px;top:502px;width:941px;height:1px;background:#d4d4d4;"></div>
<div class="a" style="left:1px;top:502px;width:42px;height:1px;background:#b1b1b1;"></div>
<div class="a" style="left:44px;top:535px;width:941px;height:1px;background:#d4d4d4;"></div>
<div class="a" style="left:1px;top:535px;width:42px;height:1px;background:#b1b1b1;"></div>
<div class="a" style="left:44px;top:568px;width:941px;height:1px;background:#d4d4d4;"></div>
<div class="a" style="left:1px;top:568px;width:42px;height:1px;background:#b1b1b1;"></div>
<div class="a" style="left:44px;top:601px;width:941px;height:1px;background:#d4d4d4;"></div>
<div class="a" style="left:1px;top:601px;width:42px;height:1px;background:#b1b1b1;"></div>
<div class="a" style="left:44px;top:634px;width:941px;height:1px;background:#d4d4d4;"></div>
<div class="a" style="left:1px;top:634px;width:42px;height:1px;background:#b1b1b1;"></div>
<div class="a" style="left:44px;top:667px;width:941px;height:1px;background:#d4d4d4;"></div>
<div class="a" style="left:1px;top:667px;width:42px;height:1px;background:#b1b1b1;"></div>
<div class="a" style="left:149px;top:239px;width:1px;height:438px;background:#d4d4d4;"></div>
<div class="a" style="left:149px;top:208px;width:1px;height:30px;background:#bcbcbc;"></div>
<div class="a" style="left:255px;top:239px;width:1px;height:438px;background:#d4d4d4;"></div>
<div class="a" style="left:255px;top:208px;width:1px;height:30px;background:#bcbcbc;"></div>
<div class="a" style="left:361px;top:239px;width:1px;height:438px;background:#d4d4d4;"></div>
<div class="a" style="left:361px;top:208px;width:1px;height:30px;background:#bcbcbc;"></div>
<div class="a" style="left:467px;top:239px;width:1px;height:438px;background:#d4d4d4;"></div>
<div class="a" style="left:467px;top:208px;width:1px;height:30px;background:#bcbcbc;"></div>
<div class="a" style="left:573px;top:239px;width:1px;height:438px;background:#d4d4d4;"></div>
<div class="a" style="left:573px;top:208px;width:1px;height:30px;background:#bcbcbc;"></div>
<div class="a" style="left:679px;top:239px;width:1px;height:438px;background:#d4d4d4;"></div>
<div class="a" style="left:679px;top:208px;width:1px;height:30px;background:#bcbcbc;"></div>
<div class="a" style="left:785px;top:239px;width:1px;height:438px;background:#d4d4d4;"></div>
<div class="a" style="left:785px;top:208px;width:1px;height:30px;background:#bcbcbc;"></div>
<div class="a" style="left:891px;top:239px;width:1px;height:438px;background:#d4d4d4;"></div>
<div class="a" style="left:891px;top:208px;width:1px;height:30px;background:#bcbcbc;"></div>
<div class="a" style="left:43px;top:208px;width:1px;height:30px;background:#bcbcbc;"></div>
<div class="a" style="left:43px;top:239px;width:1px;height:438px;background:#9e9e9e;"></div>
<div class="a" style="left:1px;top:238px;width:985px;height:1px;background:#9e9e9e;"></div>
<div class="a" style="left:985px;top:239px;width:1px;height:439px;background:#9e9e9e;"></div>
<div class="a" style="left:1px;top:677px;width:985px;height:1px;background:#9e9e9e;"></div>
<svg style="left:17px;top:212px" width="23" height="23" viewBox="0 0 23 23" ><path d="M23 0v23h-23z" fill="#b4b4b4"/></svg>
<div class="t" style="left:66.5px;width:60px;text-align:center;top:214px;font-size:22px;color:#000;transform:scaleX(0.93)">D</div>
<div class="t" style="left:172.5px;width:60px;text-align:center;top:214px;font-size:22px;color:#000;transform:scaleX(0.8)">E</div>
<div class="t" style="left:278.5px;width:60px;text-align:center;top:214px;font-size:22px;color:#000;transform:scaleX(0.82)">F</div>
<div class="t" style="left:384.5px;width:60px;text-align:center;top:214px;font-size:22px;color:#000;transform:scaleX(0.885)">G</div>
<div class="t" style="left:490.5px;width:60px;text-align:center;top:214px;font-size:22px;color:#000;transform:scaleX(0.94)">H</div>
<div class="t" style="left:596.5px;width:60px;text-align:center;top:214px;font-size:22px;color:#000;transform:scaleX(0.99)">I</div>
<div class="t" style="left:702.5px;width:60px;text-align:center;top:214px;font-size:22px;color:#000;transform:scaleX(0.72)">J</div>
<div class="t" style="left:808.5px;width:60px;text-align:center;top:214px;font-size:22px;color:#000;transform:scaleX(0.85)">K</div>
<div class="t" style="left:915.8px;width:60px;text-align:center;top:214px;font-size:22px;color:#000;transform:scaleX(0.824)">L</div>
<div class="t" style="left:-8px;width:60px;text-align:center;top:246px;font-size:22px;color:#000;letter-spacing:-0.3px">4</div>
<div class="t" style="left:-8px;width:60px;text-align:center;top:279px;font-size:22px;color:#000;letter-spacing:-0.3px">5</div>
<div class="t" style="left:-8px;width:60px;text-align:center;top:312px;font-size:22px;color:#000;letter-spacing:-0.3px">6</div>
<div class="t" style="left:-8px;width:60px;text-align:center;top:345px;font-size:22px;color:#000;letter-spacing:-0.3px">7</div>
<div class="t" style="left:-8px;width:60px;text-align:center;top:378px;font-size:22px;color:#000;letter-spacing:-0.3px">8</div>
<div class="t" style="left:-8px;width:60px;text-align:center;top:411px;font-size:22px;color:#000;letter-spacing:-0.3px">9</div>
<div class="t" style="left:-8px;width:60px;text-align:center;top:444px;font-size:22px;color:#000;letter-spacing:-0.3px">10</div>
<div class="t" style="left:-8px;width:60px;text-align:center;top:477px;font-size:22px;color:#000;letter-spacing:-0.3px">11</div>
<div class="t" style="left:-8px;width:60px;text-align:center;top:510px;font-size:22px;color:#000;letter-spacing:-0.3px">12</div>
<div class="t" style="left:-8px;width:60px;text-align:center;top:543px;font-size:22px;color:#000;letter-spacing:-0.3px">13</div>
<div class="t" style="left:-8px;width:60px;text-align:center;top:576px;font-size:22px;color:#000;letter-spacing:-0.3px">14</div>
<div class="t" style="left:-8px;width:60px;text-align:center;top:609px;font-size:22px;color:#000;letter-spacing:-0.3px">15</div>
<div class="t" style="left:-8px;width:60px;text-align:center;top:642px;font-size:22px;color:#000;letter-spacing:-0.3px">16</div>
<div class="a" style="left:989px;top:209px;width:15px;height:469px;background:#d6d6d6;"></div>
<div class="a" style="left:989px;top:210px;width:15px;height:15px;background:#fff;border:1px solid #c8c8c8"></div>
<svg style="left:993px;top:215px" width="7" height="4" viewBox="0 0 7 4" ><path d="M0 4h7l-3.500-4z" fill="#777"/></svg>
<div class="a" style="left:989px;top:291px;width:15px;height:284px;background:#fff;border:1px solid #c8c8c8"></div>
<div class="a" style="left:989px;top:663px;width:15px;height:15px;background:#fff;border:1px solid #c8c8c8"></div>
<svg style="left:993px;top:669px" width="7" height="4" viewBox="0 0 7 4" ><path d="M0 0h7l-3.500 4z" fill="#777"/></svg>
<svg style="left:455px;top:239px;overflow:hidden" width="40" height="30" viewBox="455 239 40 30"><circle cx="473.500" cy="236.800" r="7.600" fill="none" stroke="#a8a8a8" stroke-width="3.400"/><circle cx="473.500" cy="236.800" r="7.600" fill="none" stroke="#fff" stroke-width="1.300"/><path d="M478.500 239h8l-4.500 4.500z" fill="#fff" stroke="#a8a8a8" stroke-width="1"/><path d="M473.500 246.500v19" stroke="#999" stroke-width="1"/></svg>
<div class="a" style="left:149.5px;top:270.5px;width:649px;height:348.5px;background:#000;"></div>
<div class="a" style="left:154px;top:275px;width:640px;height:339.5px;background:#fff;"></div>
<div class="a" style="left:154px;top:275px;width:640px;height:10.5px;background:linear-gradient(#bfcddd,#c6d4e4 60%,#dbe8f6);"></div>
<div class="a" style="left:154px;top:285.5px;width:640px;height:5.5px;background:#000;"></div>
<div class="a" style="left:154px;top:291px;width:640px;height:16.5px;background:#2d2d2d;"></div>
<div class="a" style="left:269px;top:288px;width:114px;height:3.5px;background:#2d2d2d;border-radius:3px 3px 0 0"></div>
<div class="a" style="left:277px;top:285.5px;width:48px;height:1px;background:repeating-linear-gradient(90deg,#8a8a8a 0 2px,#333 2px 3.500px,#666 3.500px 5px,#111 5px 7px);"></div>
<svg style="left:155.5px;top:276px" width="8" height="8" viewBox="0 0 8 8" ><circle cx="4" cy="4" r="4" fill="#db4437"/><path d="M4 4L0.500 6a4 4 0 0 0 5.500 1.500z" fill="#0f9d58"/><path d="M4 4l2 3.500a4 4 0 0 0 1.500-5.500z" fill="#f4b400"/><circle cx="4" cy="4" r="1.800" fill="#4285f4" stroke="#fff" stroke-width="0.600"/></svg>
<div class="t" style="left:166.00px;top:278px;font-size:5.8px;color:#8a95a3;letter-spacing:-0.066px;">yifysubtitles.org - Google Chrome</div>
<div class="a" style="left:763px;top:276px;width:13.5px;height:7.5px;background:#bccbdd;border:0.500px solid #d8e2ee"></div>
<div class="a" style="left:779px;top:276px;width:13.5px;height:7.5px;background:#bccbdd;border:0.500px solid #d8e2ee"></div>
<svg style="left:767px;top:277.5px" width="6" height="5" viewBox="0 0 6 5" ><rect x="1.500" y="0.300" width="4" height="3" fill="#8a8a8a" stroke="#666" stroke-width="0.500"/><rect x="0.300" y="1.700" width="4" height="3" fill="#999" stroke="#666" stroke-width="0.500"/></svg>
<svg style="left:783.5px;top:277.5px" width="5" height="5" viewBox="0 0 5 5" ><path d="M0.500 0.500l4 4M4.500 0.500l-4 4" stroke="#fff" stroke-width="1.300"/></svg>
<svg style="left:160px;top:296px" width="7" height="6" viewBox="0 0 7 6" ><path d="M6.500 3h-6M3 0.300l-2.700 2.700 2.700 2.700" fill="none" stroke="#f0f0f0" stroke-width="1.200"/></svg>
<svg style="left:176px;top:296px" width="7" height="6" viewBox="0 0 7 6" ><path d="M0.500 3h6M4 0.300l2.700 2.700-2.700 2.700" fill="none" stroke="#7a7a7a" stroke-width="1.100"/></svg>
<svg style="left:191px;top:295.5px" width="7" height="7" viewBox="0 0 7 7" ><path d="M6.200 3.500a2.800 2.800 0 1 1-0.900-2" fill="none" stroke="#f0f0f0" stroke-width="1.200"/><path d="M4.200 0.200h2.600v2.600z" fill="#f0f0f0"/></svg>
<div class="a" style="left:205px;top:293px;width:380px;height:12px;background:#3a3a3a;border-radius:6px"></div>
<svg style="left:211px;top:296.5px" width="4" height="5" viewBox="0 0 4 5" ><rect x="0" y="2" width="4" height="3" fill="#bbb"/><path d="M0.800 2v-0.800a1.200 1.200 0 0 1 2.400 0v0.800" fill="none" stroke="#bbb" stroke-width="0.600"/></svg>
<div class="t" style="left:220.00px;top:296px;font-size:6.3px;color:#fff;letter-spacing:-0.138px;font-weight:bold;">yifysubtitles.org</div>
<div class="t" style="left:266.80px;top:296px;font-size:6.3px;color:#9a9a9a;letter-spacing:0.136px;">/subtitles/transcendence-2014-english-yify-64184</div>
<div class="a" style="left:763.7px;top:293.8px;width:10.2px;height:10.2px;background:#0a8fdc;border-radius:6px"></div>
<div class="a" style="left:766.8px;top:296.9px;width:4px;height:4px;background:transparent;border:1px solid #d6ecfa;border-radius:3px"></div>
<div class="a" style="left:783.5px;top:296px;width:1.2px;height:1.2px;background:#ccc;"></div>
<div class="a" style="left:783.5px;top:298.5px;width:1.2px;height:1.2px;background:#ccc;"></div>
<div class="a" style="left:783.5px;top:301px;width:1.2px;height:1.2px;background:#ccc;"></div>
<svg style="left:333.4px;top:371.9px" width="20.2" height="21" viewBox="0 0 20.2 21" ><g fill="#535353"><path d="M11 0.500h7.500l1 1v5h-4.500v1h3v1h-4.500v2.500h1.500v2h-1v-1h-1v2.500l-1.500 1.500v2h-1v2.500h1.500v0.800h-2.500v-3.500l-1-0.800-1.500 1.300v2.200h1.300v0.800h-2.300v-4l-1.500-1-1.500-2.500-1-0.500v-5h0.800l0.700 2 1.500 1.500h2l2-1.800 2-1 1-1.700z"/><rect x="0" y="17.300" width="6" height="0.700"/><rect x="14" y="17.300" width="6.200" height="0.700"/></g><rect x="12.500" y="1.800" width="1.300" height="1.300" fill="#fff"/></svg>
<div class="t" style="left:333.40px;top:407px;font-size:11.5px;color:#202124;letter-spacing:0.220px;-webkit-text-stroke:0.4px #202124;">No internet</div>
<div class="t" style="left:333.40px;top:428px;font-size:6.3px;color:#6b6b6b;letter-spacing:-0.067px;">Try:</div>
<svg style="left:344px;top:440px" width="4" height="27" viewBox="0 0 4 27" ><circle cx="2" cy="2.500" r="0.900" fill="#444"/><circle cx="2" cy="13.300" r="0.900" fill="#444"/><circle cx="2" cy="24.100" r="0.900" fill="#444"/></svg>
<div class="t" style="left:352.00px;top:440px;font-size:6.5px;color:#6b6b6b;letter-spacing:0.247px;">Checking the network cables, modem, and router</div>
<div class="t" style="left:352.00px;top:451px;font-size:6.5px;color:#6b6b6b;letter-spacing:0.260px;">Reconnecting to Wi-Fi</div>
<div class="t" style="left:352.00px;top:462px;font-size:6.5px;color:#3f7fe8;letter-spacing:0.265px;">Running Windows Network Diagnostics</div>
<div class="t" style="left:333.40px;top:479px;font-size:5px;color:#6b6b6b;letter-spacing:-0.075px;">ERR_INTERNET_DISCONNECTED</div>
<svg style="left:143.5px;top:264.5px" width="12" height="12" viewBox="0 0 12 12" ><circle cx="5.600" cy="5.600" r="4.500" fill="#fff" stroke="#8f8f8f" stroke-width="2"/></svg>
<svg style="left:467.5px;top:264.5px" width="12" height="12" viewBox="0 0 12 12" ><circle cx="5.600" cy="5.600" r="4.500" fill="#fff" stroke="#8f8f8f" stroke-width="2"/></svg>
<svg style="left:793px;top:264.5px" width="12" height="12" viewBox="0 0 12 12" ><circle cx="5.600" cy="5.600" r="4.500" fill="#fff" stroke="#8f8f8f" stroke-width="2"/></svg>
<svg style="left:143.5px;top:438.5px" width="12" height="12" viewBox="0 0 12 12" ><circle cx="5.600" cy="5.600" r="4.500" fill="#fff" stroke="#8f8f8f" stroke-width="2"/></svg>
<svg style="left:793px;top:438.5px" width="12" height="12" viewBox="0 0 12 12" ><circle cx="5.600" cy="5.600" r="4.500" fill="#fff" stroke="#8f8f8f" stroke-width="2"/></svg>
<svg style="left:143.5px;top:614.2px" width="12" height="12" viewBox="0 0 12 12" ><circle cx="5.600" cy="5.600" r="4.500" fill="#fff" stroke="#8f8f8f" stroke-width="2"/></svg>
<svg style="left:467.5px;top:614.2px" width="12" height="12" viewBox="0 0 12 12" ><circle cx="5.600" cy="5.600" r="4.500" fill="#fff" stroke="#8f8f8f" stroke-width="2"/></svg>
<svg style="left:793px;top:614.2px" width="12" height="12" viewBox="0 0 12 12" ><circle cx="5.600" cy="5.600" r="4.500" fill="#fff" stroke="#8f8f8f" stroke-width="2"/></svg>
<div class="a" style="left:1px;top:678px;width:1006px;height:26px;background:#e6e6e6;"></div>
<div class="a" style="left:621px;top:684px;width:365px;height:15px;background:#d6d6d6;"></div>
<div class="a" style="left:621px;top:684px;width:15px;height:15px;background:#fff;border:1px solid #c8c8c8"></div>
<div class="a" style="left:713px;top:684px;width:206px;height:15px;background:#fff;border:1px solid #c8c8c8"></div>
<div class="a" style="left:971px;top:684px;width:15px;height:15px;background:#fff;border:1px solid #c8c8c8"></div>
<svg style="left:977px;top:688px" width="4" height="7" viewBox="0 0 4 7" ><path d="M0 0v7l4-3.500z" fill="#777"/></svg>
<svg style="left:28px;top:687px" width="5" height="7" viewBox="0 0 5 7" ><path d="M5 0v7l-5-3.500z" fill="#c3c3c3"/></svg>
<svg style="left:56.5px;top:687px" width="5" height="7" viewBox="0 0 5 7" ><path d="M0 0v7l5-3.500z" fill="#c3c3c3"/></svg>
<div class="a" style="left:101px;top:681px;width:1px;height:20px;background:#ababab;"></div>
<div class="t" style="left:114.20px;top:684px;font-size:13.5px;color:#444;letter-spacing:-0.880px;">Sheet1</div>
<div class="a" style="left:166px;top:677px;width:66px;height:25px;background:#fff;border-left:1px solid #ababab;border-right:1px solid #ababab;border-bottom:2px solid #217346"></div>
<div class="t" style="left:178.20px;top:684px;font-size:13.5px;color:#217346;letter-spacing:-0.660px;font-weight:bold;">Sheet2</div>
<div class="t" style="left:244.20px;top:684px;font-size:13.5px;color:#444;letter-spacing:-0.880px;">Sheet3</div>
<div class="a" style="left:295px;top:681px;width:1px;height:20px;background:#ababab;"></div>
<svg style="left:329px;top:683px" width="16" height="16" viewBox="0 0 16 16" ><circle cx="8" cy="8" r="7.300" fill="none" stroke="#777" stroke-width="1"/><path d="M8 4v8M4 8h8" stroke="#777" stroke-width="1.400"/></svg>
<div class="a" style="left:1px;top:706px;width:1291px;height:21px;background:#f3f2f1;"></div>
<div class="a" style="left:1px;top:705px;width:1291px;height:1px;background:#d4d4d4;"></div>
<div class="t" style="left:9.20px;top:711px;font-size:11.5px;color:#444;letter-spacing:-0.675px;">Ready</div>
<div class="t" style="left:55.10px;top:711px;font-size:11.5px;color:#444;letter-spacing:0.094px;">Workbook Statistics</div>
<svg style="left:178px;top:708.5px" width="15" height="15" viewBox="0 0 15 15" ><circle cx="6" cy="2.200" r="1.700" fill="none" stroke="#444" stroke-width="1.100"/><path d="M0.800 4.300c1.200-0.800 2 0.700 3.700 1 1 0.200 2 0.200 3 0 1.700-0.300 2.500-1.800 3.700-1 0.800 1-1.200 2.200-3.200 3l-0.300 2.200M4.300 7.500c0.200 2-0.500 4.500-1.800 6.200 0.500 0.800 1.500 0.500 2-0.500l1.500-3" fill="none" stroke="#444" stroke-width="1.100" stroke-linejoin="round"/><path d="M8 9.500l5.500 5M13.500 9.500l-5.500 5" stroke="#444" stroke-width="1.100"/></svg>
<div class="t" style="left:196.30px;top:711px;font-size:11.5px;color:#444;letter-spacing:-0.104px;">Accessibility: Investigate</div>
<div class="a" style="left:981px;top:706px;width:40px;height:21px;background:#d0d0d0;"></div>
<svg style="left:994px;top:709px" width="13" height="13" viewBox="0 0 13 13" ><path d="M0.500 0.500h12v12h-12zM4.500 0.500v12M8.500 0.500v12M0.500 4.500h12M0.500 8.500h12" fill="none" stroke="#444" stroke-width="1.100"/></svg>
<svg style="left:1034px;top:709px" width="14" height="13" viewBox="0 0 14 13" ><rect x="0.500" y="0.500" width="13" height="12" fill="none" stroke="#444" stroke-width="1.100"/><rect x="3.500" y="3.500" width="7" height="6" fill="none" stroke="#444" stroke-width="1"/><path d="M5 5.500h4M5 7.500h4" stroke="#444" stroke-width="0.800"/></svg>
<svg style="left:1074px;top:709px" width="14" height="13" viewBox="0 0 14 13" ><path d="M0.500 0.500h13v12h-13zM4.500 0.500v6h4.500v-6M0.500 6.500h4" fill="none" stroke="#444" stroke-width="1.100"/></svg>
<div class="a" style="left:1107px;top:715px;width:8px;height:1.2px;background:#444;"></div>
<div class="a" style="left:1120px;top:715.3px;width:100px;height:1px;background:#555;"></div>
<div class="a" style="left:1170.3px;top:712px;width:1px;height:8px;background:#555;"></div>
<div class="a" style="left:1178px;top:710.5px;width:5px;height:11.5px;background:#777;"></div>
<div class="a" style="left:1225px;top:715px;width:8px;height:1.2px;background:#444;"></div>
<div class="a" style="left:1228.4px;top:711.6px;width:1.2px;height:8px;background:#444;"></div>
<div class="t" style="left:1246.60px;top:711px;font-size:11.5px;color:#444;letter-spacing:-1.033px;">166%</div>
<div class="a" style="left:1007px;top:198px;width:1px;height:505px;background:#c6c6c6;"></div>
<div class="a" style="left:1006.7px;top:211.8px;width:285.3px;height:361px;background:#e6e6e6;border:3.300px solid #000;border-radius:5px"></div>
<div class="t" style="left:1021.50px;top:225px;font-size:20px;color:#2a7a4e;letter-spacing:0.254px;">Format Picture</div>
<svg style="left:1222px;top:229.3px" width="9" height="5" viewBox="0 0 9 5" ><path d="M0 0h9l-4.500 4.600z" fill="#777"/></svg>
<svg style="left:1263px;top:226.5px" width="10" height="9" viewBox="0 0 10 9" ><path d="M0.800 0.500l8.400 8M9.200 0.500l-8.400 8" stroke="#666" stroke-width="1.900"/></svg>
<svg style="left:1026.5px;top:258px" width="24" height="22" viewBox="0 0 24 22" ><path d="M8.500 4.500l10 8-8.500 8.500-9-9z" fill="#fff" stroke="#666" stroke-width="1.300" stroke-linejoin="round"/><path d="M8.500 8v-5a2.300 2.300 0 0 1 4.600 0v3.500" fill="none" stroke="#666" stroke-width="1.200"/><circle cx="10.700" cy="9" r="1.300" fill="#666"/><path d="M18.500 8.500c3.500 2.500 5.500 6 4 11-0.500-3-2-5.500-4.500-6z" fill="#777"/></svg>
<div class="a" style="left:1063px;top:255.3px;width:30px;height:29.5px;background:#ababab;"></div>
<svg style="left:1067.5px;top:258px" width="21" height="24" viewBox="0 0 21 24" ><path d="M10.500 1l9.500 7.300-3.600 11.200h-11.800l-3.600-11.200z" fill="#dfeadf" stroke="#2e7d3c" stroke-width="1.100" stroke-linejoin="round"/><path d="M4.600 19.500l-1.500 4.500M16.400 19.500l1.500 4.500" stroke="#7fae86" stroke-width="1.300"/><path d="M4.600 19.600h11.800" stroke="#1f7a33" stroke-width="2.200"/></svg>
<svg style="left:1107px;top:258.5px" width="22" height="22" viewBox="0 0 22 22" ><path d="M0.500 6.500h4M2.500 6.500v15M0.500 21.500h4M6.500 0.500v4M6.500 2.500h15M21.500 0.500v4" fill="none" stroke="#777" stroke-width="1"/><rect x="6.500" y="6.500" width="15" height="15" fill="#767676"/><path d="M14 8.500v11M8.500 14h11M12.500 10l1.500-1.500 1.500 1.500M12.500 18l1.500 1.500 1.500-1.500M10 12.500l-1.500 1.500 1.500 1.500M18 12.500l1.500 1.500-1.500 1.500" fill="none" stroke="#fff" stroke-width="1"/></svg>
<svg style="left:1147px;top:258.5px" width="22" height="22" viewBox="0 0 22 22" ><rect x="0.600" y="1" width="21" height="21" fill="#fff" stroke="#777" stroke-width="1.200"/><circle cx="16.500" cy="6.300" r="2.500" fill="#777"/><path d="M2.300 20.200v-5l4.800-4.800 9.800 9.800z" fill="#777"/><path d="M13 13.500l1.800-1.800h0.800l4.400 4.400v4.100h-1.300z" fill="#777"/></svg>
<svg style="left:1021px;top:291.8px" width="257" height="9" viewBox="0 0 257 9" ><path d="M0 7.600h51l6.200-6.600 6.200 6.600h193.600" fill="none" stroke="#c8c8c8" stroke-width="1"/><path d="M51.500 7.600l5.700-6 5.700 6z" fill="#f1f1f1"/></svg>
<svg style="left:1029.8px;top:309.8px" width="6" height="9" viewBox="0 0 6 9" ><path d="M0.500 0.500v8l4.500-4z" fill="#fff" stroke="#777" stroke-width="0.900"/></svg>
<div class="t" style="left:1043.20px;top:309px;font-size:12px;color:#444;letter-spacing:-0.480px;font-weight:bold;">Shadow</div>
<svg style="left:1029.8px;top:335.8px" width="6" height="9" viewBox="0 0 6 9" ><path d="M0.500 0.500v8l4.500-4z" fill="#fff" stroke="#777" stroke-width="0.900"/></svg>
<div class="t" style="left:1043.20px;top:335px;font-size:12px;color:#444;letter-spacing:-0.033px;font-weight:bold;">Reflection</div>
<svg style="left:1029.8px;top:361.8px" width="6" height="9" viewBox="0 0 6 9" ><path d="M0.500 0.500v8l4.500-4z" fill="#fff" stroke="#777" stroke-width="0.900"/></svg>
<div class="t" style="left:1043.20px;top:361px;font-size:12px;color:#444;letter-spacing:-0.300px;font-weight:bold;">Glow</div>
<svg style="left:1029.8px;top:387.8px" width="6" height="9" viewBox="0 0 6 9" ><path d="M0.500 0.500v8l4.500-4z" fill="#fff" stroke="#777" stroke-width="0.900"/></svg>
<div class="t" style="left:1043.20px;top:387px;font-size:12px;color:#444;letter-spacing:-0.433px;font-weight:bold;">Soft Edges</div>
<svg style="left:1029.8px;top:413.8px" width="6" height="9" viewBox="0 0 6 9" ><path d="M0.500 0.500v8l4.500-4z" fill="#fff" stroke="#777" stroke-width="0.900"/></svg>
<div class="t" style="left:1043.20px;top:413px;font-size:12px;color:#444;letter-spacing:0.022px;font-weight:bold;">3-D Format</div>
<svg style="left:1029.8px;top:439.8px" width="6" height="9" viewBox="0 0 6 9" ><path d="M0.500 0.500v8l4.500-4z" fill="#fff" stroke="#777" stroke-width="0.900"/></svg>
<div class="t" style="left:1043.20px;top:439px;font-size:12px;color:#444;letter-spacing:0.018px;font-weight:bold;">3-D Rotation</div>
<svg style="left:1029.8px;top:465.8px" width="6" height="9" viewBox="0 0 6 9" ><path d="M0.500 0.500v8l4.500-4z" fill="#fff" stroke="#777" stroke-width="0.900"/></svg>
<div class="t" style="left:1043.20px;top:465px;font-size:12px;color:#444;letter-spacing:-0.200px;font-weight:bold;">Artistic Effects</div>
<div class="a" style="left:589px;top:195px;width:84px;height:63px;background:#fff;border:1px solid #c6c6c6;box-shadow:0 1px 4px rgba(0,0,0,0.25)"></div>
<svg style="left:603px;top:205px" width="23" height="21" viewBox="0 0 23 21" ><path d="M16.500 17.500h5v-17h-21v17h4" fill="#f8f8f8" stroke="#3b3a39" stroke-width="1.100"/><path d="M0.500 12.500l6-6.500 5 5" fill="none" stroke="#3b3a39" stroke-width="1"/><circle cx="15.800" cy="5" r="1.400" fill="#3b3a39"/><path d="M11.500 14l9-7.500c1-0.800 2.300 0.400 1.500 1.400l-8 8.600z" fill="#fff" stroke="#3b3a39" stroke-width="1"/><path d="M11.500 14l2.500 2.500c-1 3-4.500 4.500-9.500 3.500 3-1 3.500-2.500 4-4 0.500-1.500 1.500-2 3-2z" fill="#7db3e8" stroke="#2b7bd4" stroke-width="0.800"/></svg>
<svg style="left:627.7px;top:212.9px" width="6" height="4.0" viewBox="0 0 6 4.0" ><path d="M0.5 0.5l2.5 2.5 2.5 -2.5" fill="none" stroke="#3b3a39" stroke-width="1.1"/></svg>
<svg style="left:641px;top:203px" width="22" height="22" viewBox="0 0 22 22" ><path d="M0 4.500h17.500v17.500M4.500 0v17.500h17.500M4.500 17.500l15.500-15.500" fill="none" stroke="#3b3a39" stroke-width="1.100"/></svg>
<div class="t" style="left:602.30px;top:234px;font-size:11px;color:#262524;letter-spacing:-0.300px;">Style</div>
<div class="t" style="left:639.60px;top:234px;font-size:11px;color:#262524;letter-spacing:0.067px;">Crop</div>
<div class="a" style="left:589px;top:272px;width:172px;height:421px;background:#fff;border:1px solid #c8c6c4;box-shadow:0 2px 6px rgba(0,0,0,0.30)"></div>
<svg style="left:606px;top:280.4px" width="10" height="16" viewBox="0 0 10 16" ><path d="M2.800 0.500l3.700 10M7.200 0.500l-3.700 10" stroke="#484644" stroke-width="1" fill="none"/><circle cx="2.300" cy="13" r="1.800" fill="none" stroke="#1e8bcd" stroke-width="1.100"/><circle cx="7.700" cy="13" r="1.800" fill="none" stroke="#1e8bcd" stroke-width="1.100"/></svg>
<div class="t" style="left:628.40px;top:283px;font-size:12.5px;color:#262524;letter-spacing:-0.450px;">Cut</div>
<div class="a" style="left:643.5px;top:294.3px;width:3.5px;height:1px;background:#262524;"></div>
<svg style="left:602.9px;top:308px" width="16" height="16" viewBox="0 0 16 16" ><path d="M4.500 12.500h-4v-12h6l2 2" fill="none" stroke="#3b3a39" stroke-width="1.100"/><path d="M6.500 3.500h5l4 4v8h-9z" fill="#fff" stroke="#3b3a39" stroke-width="1.100"/><path d="M9 9.500h4M9 12h4" stroke="#3b3a39" stroke-width="1"/></svg>
<div class="t" style="left:628.40px;top:311px;font-size:12.5px;color:#262524;letter-spacing:-0.567px;">Copy</div>
<div class="a" style="left:628.4px;top:322.5px;width:7.1px;height:1px;background:#262524;"></div>
<svg style="left:604.5px;top:335.8px" width="14.4" height="16.6" viewBox="0 0 20 23" ><path d="M4 3.500h-3v17h7.500" fill="none" stroke="#e8791d" stroke-width="1.300"/><path d="M12 3.500h3.500v5" fill="none" stroke="#e8791d" stroke-width="1.300"/><path d="M4 5.500v-3h2.500a1.800 1.800 0 0 1 3.600 0h2.500v3z" fill="#fff" stroke="#8a8886" stroke-width="1"/><rect x="10.500" y="10.500" width="8.500" height="11.500" fill="#fff" stroke="#3b3a39" stroke-width="1.200"/></svg>
<div class="t" style="left:629.30px;top:340px;font-size:12.5px;color:#262524;letter-spacing:-0.715px;font-weight:bold;">Paste Options:</div>
<svg style="left:630px;top:364.5px" width="20.4" height="23.5" viewBox="0 0 20 23" ><path d="M4 3.500h-3v17h7.500" fill="none" stroke="#e8791d" stroke-width="1.300"/><path d="M12 3.500h3.500v5" fill="none" stroke="#e8791d" stroke-width="1.300"/><path d="M4 5.500v-3h2.500a1.800 1.800 0 0 1 3.600 0h2.500v3z" fill="#fff" stroke="#8a8886" stroke-width="1"/><rect x="10.500" y="10.500" width="8.500" height="11.500" fill="#fff" stroke="#3b3a39" stroke-width="1.200"/></svg>
<div class="a" style="left:623px;top:394.9px;width:136px;height:1px;background:#e1dfdd;"></div>
<svg style="left:602.9px;top:404px" width="16" height="14" viewBox="0 0 16 14" ><path d="M4 0.500h11.500v10.500h-7" fill="none" stroke="#3b3a39" stroke-width="1.100"/><path d="M5.500 5l4.500 5M9 7l2.500-2.500 4 4" fill="none" stroke="#3b3a39" stroke-width="1"/><circle cx="12.800" cy="3.300" r="1" fill="#3b3a39"/><path d="M1 5.500c0.500-2 2.500-2.500 4-1.500l2.500 2M7.500 3.500v2.800h-2.800" fill="none" stroke="#1e8bcd" stroke-width="1.100"/><path d="M1 7.500c0 2.500 2 4 4.500 3.500M3.500 9.500l2 1.500-1.500 2" fill="none" stroke="#1e8bcd" stroke-width="1.100"/></svg>
<div class="t" style="left:628.80px;top:405px;font-size:12.5px;color:#262524;letter-spacing:-0.454px;">Change Picture</div>
<div class="a" style="left:663.8px;top:416.2px;width:6.4px;height:1px;background:#262524;"></div>
<svg style="left:745.4px;top:405.2px" width="6" height="9.4" viewBox="0 0 6 9.4" ><path d="M0.500 0.500l5 4.200-5 4.200" fill="none" stroke="#3b3a39" stroke-width="1.100"/></svg>
<div class="a" style="left:623px;top:426.1px;width:136px;height:1px;background:#e1dfdd;"></div>
<svg style="left:602.9px;top:433px" width="16" height="16" viewBox="0 0 16 16" ><rect x="2.500" y="2.500" width="8" height="8" fill="none" stroke="#a19f9d" stroke-width="1"/><rect x="5.500" y="5.500" width="8" height="8" fill="none" stroke="#a19f9d" stroke-width="1"/><path d="M0.500 2v-1.500h1.500M14 0.500h1.500v1.500M15.500 14v1.500h-1.500M2 15.500h-1.500v-1.500" fill="none" stroke="#8a8886" stroke-width="1"/><path d="M4 0.500h8M4 15.500h8M0.500 4v8M15.500 4v8" fill="none" stroke="#a19f9d" stroke-width="1" stroke-dasharray="1.500 2"/></svg>
<div class="t" style="left:628.40px;top:436px;font-size:12.5px;color:#a19f9d;letter-spacing:-0.650px;">Group</div>
<div class="a" style="left:628.4px;top:446.9px;width:8.0px;height:1px;background:#a19f9d;"></div>
<svg style="left:745.4px;top:436.2px" width="6" height="9.4" viewBox="0 0 6 9.4" ><path d="M0.500 0.500l5 4.200-5 4.200" fill="none" stroke="#8a8886" stroke-width="1.100"/></svg>
<svg style="left:602.9px;top:461px" width="16" height="16" viewBox="0 0 16 16" ><path d="M0.500 4v-3.500h4M12 15.500h3.500v-4" fill="none" stroke="#8a8886" stroke-width="1"/><rect x="3.500" y="3.500" width="9.500" height="9.500" fill="#d2d0ce" stroke="#a19f9d" stroke-width="1"/></svg>
<div class="t" style="left:628.40px;top:464px;font-size:12.5px;color:#a19f9d;letter-spacing:-0.231px;">Bring to Front</div>
<div class="a" style="left:680.5px;top:475.4px;width:4.0px;height:1px;background:#a19f9d;"></div>
<div class="a" style="left:736px;top:463.2px;width:1px;height:12.5px;background:#d2d0ce;"></div>
<svg style="left:745.4px;top:464.90000000000003px" width="6" height="9.4" viewBox="0 0 6 9.4" ><path d="M0.500 0.500l5 4.200-5 4.200" fill="none" stroke="#8a8886" stroke-width="1.100"/></svg>
<svg style="left:602.9px;top:489px" width="16" height="16" viewBox="0 0 16 16" ><rect x="0.500" y="0.500" width="6" height="6" fill="#fff" stroke="#8a8886" stroke-width="1"/><rect x="9.500" y="9.500" width="6" height="6" fill="#fff" stroke="#8a8886" stroke-width="1"/><path d="M8 3.500h4.500v4.500M3.500 8v4.500h4.500" fill="none" stroke="#a19f9d" stroke-width="1"/><rect x="4.500" y="4.500" width="6.500" height="6.500" fill="#d2d0ce"/></svg>
<div class="t" style="left:628.40px;top:492px;font-size:12.5px;color:#a19f9d;letter-spacing:-0.609px;">Send to Back</div>
<div class="a" style="left:690px;top:503.5px;width:6px;height:1px;background:#a19f9d;"></div>
<div class="a" style="left:736px;top:491.3px;width:1px;height:12.5px;background:#d2d0ce;"></div>
<svg style="left:745.4px;top:493.0px" width="6" height="9.4" viewBox="0 0 6 9.4" ><path d="M0.500 0.500l5 4.200-5 4.200" fill="none" stroke="#8a8886" stroke-width="1.100"/></svg>
<div class="a" style="left:623px;top:512.7px;width:136px;height:1px;background:#e1dfdd;"></div>
<svg style="left:602.9px;top:522.9px" width="16" height="11" viewBox="0 0 16 11" ><path d="M6.500 7.500c-1.500 1-3.500 1-4.800-0.300-1.600-1.600-1.500-4 0.300-5.200 1.500-1 3.600-0.800 5 0.300M9.500 3c1.500-1 3.500-1 4.800 0.300 1.600 1.600 1.500 4-0.300 5.200-1.500 1-3.600 0.800-5-0.300" fill="none" stroke="#3b3a39" stroke-width="1.100"/><path d="M7 2.300c1.500 0.800 2.500 2.200 2.500 3.700M9 8.200c-1.500-0.800-2.500-2.200-2.500-3.700" fill="none" stroke="#3b3a39" stroke-width="1.100"/></svg>
<div class="t" style="left:628.40px;top:523px;font-size:12.5px;color:#262524;letter-spacing:-0.533px;">Link</div>
<div class="a" style="left:635.2px;top:534.2px;width:3.0px;height:1px;background:#262524;"></div>
<div class="a" style="left:623px;top:543.8px;width:136px;height:1px;background:#e1dfdd;"></div>
<div class="t" style="left:628.40px;top:554px;font-size:12.5px;color:#262524;letter-spacing:-0.700px;">Save as Picture...</div>
<div class="a" style="left:628.4px;top:565.1px;width:6.6px;height:1px;background:#262524;"></div>
<div class="a" style="left:623px;top:575.0px;width:136px;height:1px;background:#e1dfdd;"></div>
<div class="t" style="left:628.40px;top:585px;font-size:12.5px;color:#262524;letter-spacing:-0.421px;">Assign Macro...</div>
<div class="a" style="left:656px;top:596.5px;width:6.8px;height:1px;background:#262524;"></div>
<div class="a" style="left:623px;top:605.9px;width:136px;height:1px;background:#e1dfdd;"></div>
<svg style="left:602.9px;top:615.4px" width="16" height="14" viewBox="0 0 16 14" ><path d="M5.500 11.500h-5v-11h15v7" fill="none" stroke="#3b3a39" stroke-width="1.100"/><path d="M0.500 8.500l4.500-4.500 4.500 4.500M8 7l2.500-2 2.500 2.500" fill="none" stroke="#3b3a39" stroke-width="1"/><circle cx="12.500" cy="3.200" r="0.900" fill="#3b3a39"/><rect x="6.500" y="9.500" width="9" height="4" fill="#fff" stroke="#1e8bcd" stroke-width="1.100"/><path d="M8.500 11.500h5" stroke="#1e8bcd" stroke-width="1"/></svg>
<div class="t" style="left:628.40px;top:616px;font-size:12.5px;color:#262524;letter-spacing:-0.307px;">Edit Alt Text...</div>
<div class="a" style="left:651.3px;top:627.2px;width:7.7px;height:1px;background:#262524;"></div>
<svg style="left:603px;top:641px" width="16" height="16" viewBox="0 0 16 16" ><path d="M2.500 1v14M0.500 3l2-2.500 2 2.500M0.500 13l2 2.500 2-2.500" fill="none" stroke="#1e8bcd" stroke-width="1.100"/><rect x="10" y="0.500" width="5.500" height="15" fill="#fff" stroke="#3b3a39" stroke-width="1.100"/><path d="M6.500 0.500h2M6.500 15.500h2" stroke="#3b3a39" stroke-width="1"/></svg>
<div class="t" style="left:628.30px;top:644px;font-size:12.5px;color:#262524;letter-spacing:-0.590px;">Size and Properties...</div>
<div class="a" style="left:638.5px;top:655.4px;width:5.5px;height:1px;background:#262524;"></div>
<div class="a" style="left:589.3px;top:664.2px;width:171.2px;height:30.5px;background:#fff;border:3px solid #000;border-radius:6px"></div>
<svg style="left:603px;top:669px" width="17" height="16" viewBox="0 0 17 16" ><path d="M5.500 3.500l5.500 4-4.500 5-5.500-4.500z" fill="#fff" stroke="#3b3a39" stroke-width="1" stroke-linejoin="round"/><path d="M4.500 5v-3.500a1.500 1.500 0 0 1 3 0v3" fill="none" stroke="#3b3a39" stroke-width="0.900"/><path d="M10.500 3c1.500 1 2 2.500 1.500 4" fill="none" stroke="#1e6fc0" stroke-width="1.300"/><path d="M9 11l6-5c0.800-0.500 1.600 0.300 1 1l-5.500 5.700z" fill="#fff" stroke="#3b3a39" stroke-width="0.800"/><path d="M9 11l1.700 1.700c-0.700 2-3 3-6.500 2.500 2-0.700 2.500-1.700 2.800-2.700 0.300-1 1-1.500 2-1.500z" fill="#4a9be0" stroke="#1e6fc0" stroke-width="0.700"/></svg>
<div class="t" style="left:628.70px;top:672px;font-size:12.5px;color:#262524;letter-spacing:-0.419px;">Format Picture...</div>
<div class="a" style="left:634.8px;top:683.3px;width:7.0px;height:1px;background:#262524;"></div>
<svg style="left:405px;top:610px" width="30" height="35" viewBox="405 610 30 35"><path d="M419.400 617v12" stroke="#000" stroke-width="2.900"/><path d="M413.300 623.400L419.400 641l6.100-17.600Q419.400 631 413.300 623.400z" fill="#000"/></svg>
<div class="t" style="left:378.80px;top:641px;font-size:18.5px;color:#000;letter-spacing:-0.080px;font-weight:bold;">Right Click</div>
<div class="t" style="left:345.20px;top:666px;font-size:18.5px;color:#000;letter-spacing:0.175px;font-weight:bold;">on the screenshot</div>
<svg style="left:0;top:0" width="1293" height="728" viewBox="0 0 1293 728"><path d="M760.500 677L1001 274" stroke="#000" stroke-width="3.200" fill="none"/><path d="M1006.600 264.500L992.300 276.200c4 1 7.500 3.200 10 6.300z" fill="#000"/></svg>
<div class="a" style="left:0;top:34px;width:1px;height:694px;background:#217346"></div>
<div class="a" style="left:1292px;top:34px;width:1px;height:694px;background:#217346"></div>
<div class="a" style="left:0;top:727px;width:1293px;height:1px;background:#217346"></div>
</div></body></html>
